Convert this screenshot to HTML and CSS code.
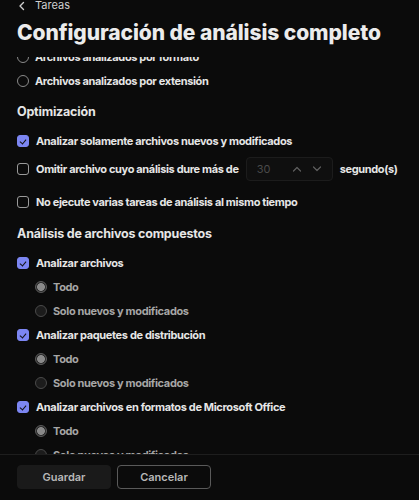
FILE: index.html
```html
<!DOCTYPE html>
<html lang="es">
<head>
<meta charset="utf-8">
<title>Configuración de análisis completo</title>
<link rel="stylesheet" href="styles.css">
</head>
<body>
<div class="page">
  <header class="header">
    <div class="back">
      <svg class="back-icon" width="8" height="10" viewBox="0 0 8 10"><path d="M5.5 1.5 L2 5 L5.5 8.5" fill="none" stroke="#cfcfcf" stroke-width="1.4" stroke-linecap="round" stroke-linejoin="round"/></svg>
      <span>Tareas</span>
    </div>
    <h1 class="title">Configuración de análisis completo</h1>
  </header>
  <main class="scroll">
    <div class="content">
      <div class="row"><span class="radio"></span><span class="label">Archivos analizados por formato</span></div>
      <div class="row"><span class="radio"></span><span class="label">Archivos analizados por extensión</span></div>

      <h2 class="heading">Optimización</h2>
      <div class="row gap9"><span class="check on"></span><span class="label">Analizar solamente archivos nuevos y modificados</span></div>
      <div class="row gap4"><span class="check"></span><span class="label">Omitir archivo cuyo análisis dure más de</span>
        <div class="num">
          <span class="num-val">30</span>
          <svg class="arrow" width="10" height="6" viewBox="0 0 10 6"><path d="M1.5 5 L5 1.5 L8.5 5" fill="none" stroke="#5f5f5f" stroke-width="1.2" stroke-linecap="round" stroke-linejoin="round"/></svg>
          <svg class="arrow" width="10" height="6" viewBox="0 0 10 6"><path d="M1.5 1 L5 4.5 L8.5 1" fill="none" stroke="#5f5f5f" stroke-width="1.2" stroke-linecap="round" stroke-linejoin="round"/></svg>
        </div>
        <span class="label unit">segundo(s)</span>
      </div>
      <div class="row gap9"><span class="check"></span><span class="label">No ejecute varias tareas de análisis al mismo tiempo</span></div>

      <h2 class="heading gap12">Análisis de archivos compuestos</h2>
      <div class="row gap9"><span class="check on"></span><span class="label">Analizar archivos</span></div>
      <div class="row sub"><span class="radio dis sel"></span><span class="label dim">Todo</span></div>
      <div class="row sub"><span class="radio dis"></span><span class="label dim">Solo nuevos y modificados</span></div>
      <div class="row"><span class="check on"></span><span class="label">Analizar paquetes de distribución</span></div>
      <div class="row sub"><span class="radio dis sel"></span><span class="label dim">Todo</span></div>
      <div class="row sub"><span class="radio dis"></span><span class="label dim">Solo nuevos y modificados</span></div>
      <div class="row"><span class="check on"></span><span class="label">Analizar archivos en formatos de Microsoft Office</span></div>
      <div class="row sub"><span class="radio dis sel"></span><span class="label dim">Todo</span></div>
      <div class="row sub"><span class="radio dis"></span><span class="label dim">Solo nuevos y modificados</span></div>
    </div>
  </main>
  <footer class="footer">
    <button class="btn primary">Guardar</button>
    <button class="btn outline">Cancelar</button>
  </footer>
</div>
</body>
</html>
```
FILE: styles.css
```css
* { box-sizing: border-box; }
html, body { margin: 0; padding: 0; background: #0b0b0b; }
body {
  font-family: Inter, "Noto Sans", sans-serif;
  color: #e6e6e6;
  width: 419px;
  height: 500px;
  overflow: hidden;
}
.page {
  display: flex;
  flex-direction: column;
  height: 500px;
}
.header {
  height: 57px;
  flex: none;
  padding: 0 17px;
  background: #0b0b0b;
  position: relative;
  z-index: 1;
}
.back {
  display: flex;
  align-items: center;
  height: 11px;
  font-size: 11px;
  color: #cfcfcf;
  gap: 9px;
  padding-left: 1px;
}
.back span { line-height: 11px; }
.title {
  margin: 10px 0 0;
  font-size: 21px;
  line-height: 24px;
  font-weight: 800;
  letter-spacing: -0.08px;
  color: #ececec;
}
.scroll {
  flex: 1;
  overflow: hidden;
}
.content {
  margin-top: -12px;
  padding: 0 17px;
  display: flex;
  flex-direction: column;
}
.row {
  height: 24px;
  display: flex;
  align-items: center;
  flex: none;
}
.gap9 { margin-top: 9px; }
.gap4 { margin-top: 4px; }
.sub { padding-left: 18px; }
.label {
  font-size: 11px;
  font-weight: 650;
  letter-spacing: -0.35px;
  color: #e6e6e6;
  white-space: nowrap;
}
.label.dim { color: #a6a6a6; }
.label.unit { margin-left: 7px; }
.heading {
  margin: 11px 0 0;
  height: 16px;
  line-height: 16px;
  font-size: 12.5px;
  font-weight: 700;
  letter-spacing: -0.2px;
  color: #e6e6e6;
}
.heading.gap12 { margin-top: 12px; }
.check {
  width: 12px;
  height: 12px;
  border: 1px solid #9a9a9a;
  border-radius: 3px;
  margin-right: 7px;
  flex: none;
  position: relative;
}
.check.on {
  background: #7c86f2;
  border-color: #7c86f2;
}
.check.on::after {
  content: "";
  position: absolute;
  left: 3px;
  top: 1.5px;
  width: 3px;
  height: 5px;
  border-right: 1.3px solid #111;
  border-bottom: 1.3px solid #111;
  transform: rotate(40deg);
}
.radio {
  width: 12px;
  height: 12px;
  border-radius: 50%;
  border: 1px solid #8a8a8a;
  margin-right: 6px;
  flex: none;
}
.radio.dis {
  border: 1.5px solid #4a4a4a;
  background: #1c1c1c;
}
.radio.dis.sel {
  border: 1.5px solid #5c5c5c;
  background: radial-gradient(circle, #8a8a8a 0 3.6px, #2a2a2a 4.2px);
}
.num {
  margin-left: 7px;
  width: 87px;
  height: 24px;
  border: 1px solid #1c1c1c;
  background: #0f0f0f;
  border-radius: 4px;
  display: flex;
  align-items: center;
  padding: 0 10px 0 10px;
  gap: 10px;
}
.num-val {
  flex: 1;
  font-size: 11px;
  color: #4a4a4a;
}
.arrow { flex: none; }
.footer {
  flex: none;
  height: 46px;
  border-top: 1px solid #1e1e1e;
  padding: 10px 17px 0;
  display: flex;
  gap: 6px;
  background: #0b0b0b;
}
.btn {
  width: 94px;
  height: 24px;
  border-radius: 4px;
  font-family: Inter, "Noto Sans", sans-serif;
  font-size: 11px;
  font-weight: 600;
  color: #b8b8b8;
  cursor: pointer;
}
.btn.primary {
  background: #1a1a1a;
  border: 1px solid #1a1a1a;
}
.btn.outline {
  background: transparent;
  border: 1px solid #5a5a5a;
}
```
